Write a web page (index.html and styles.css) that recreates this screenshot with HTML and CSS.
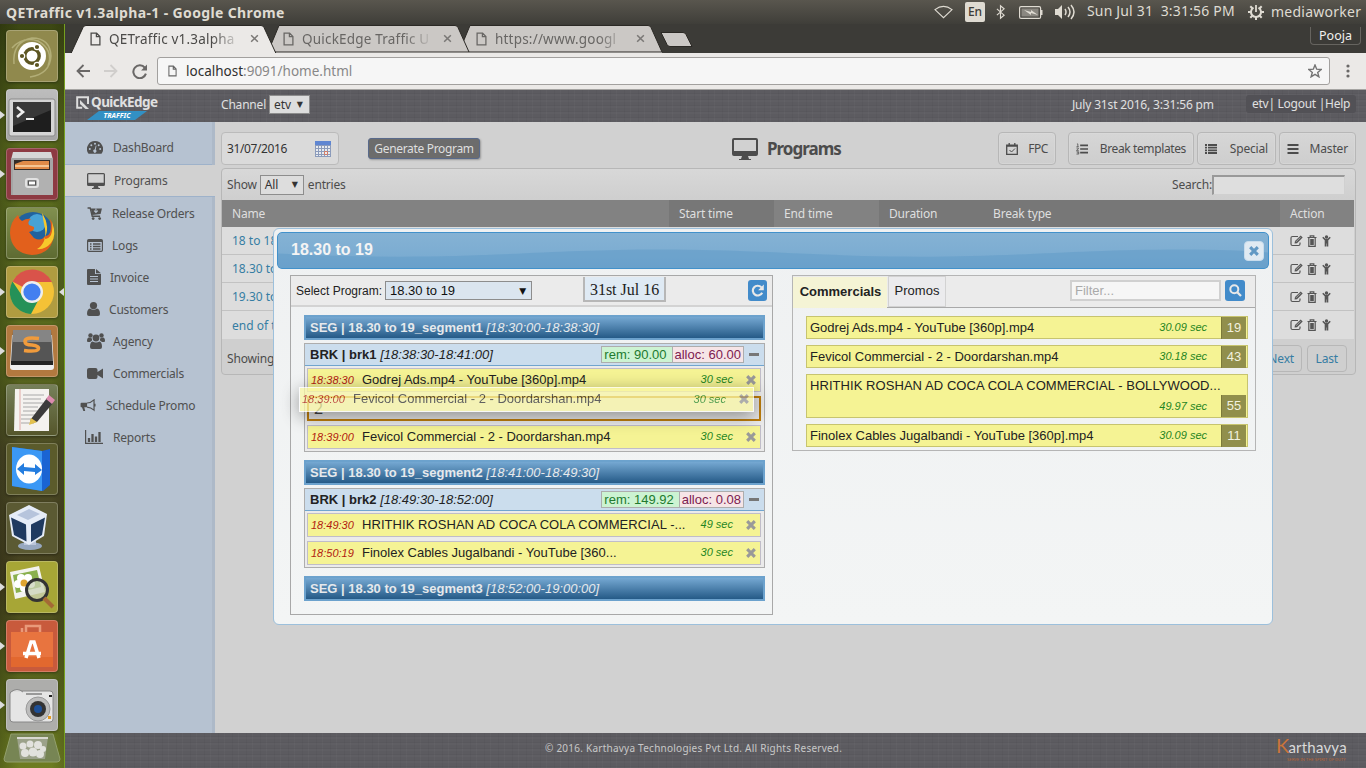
FILE: index.html
```html
<!DOCTYPE html>
<html lang="en">
<head>
<meta charset="utf-8">
<title>QETraffic v1.3alpha-1</title>
<link rel="stylesheet" href="styles.css">
</head>
<body>
<svg class="defs" width="0" height="0">
  <defs>
    <symbol id="page" viewBox="0 0 12 15"><path d="M1.2 1h6l3.6 3.8V14H1.2zM7 1.2V5h3.8" fill="none" stroke="currentColor" stroke-width="1.4"/></symbol>
    <symbol id="x" viewBox="0 0 10 10"><path d="M1.3 1.3l7.4 7.4M8.7 1.3L1.3 8.7" stroke="currentColor" stroke-width="1.7"/></symbol>
    <symbol id="times" viewBox="0 0 10 10"><path d="M1.2 1.2l7.6 7.6M8.8 1.2L1.2 8.8" stroke="currentColor" stroke-width="3.1"/></symbol>
    <symbol id="monitor" viewBox="0 0 18 16"><path fill-rule="evenodd" d="M1.5 0h15A1.5 1.5 0 0 1 18 1.500v10a1.500 1.500 0 0 1-1.500 1.500H11l.7 2H13v1H5v-1h1.300l.7-2H1.500A1.500 1.500 0 0 1 0 11.500v-10A1.500 1.500 0 0 1 1.500 0zM1.300 1.300v8.400h15.400V1.300z" fill="currentColor"/></symbol>
    <symbol id="edit" viewBox="0 0 13 12"><path d="M8 1.500H2.500Q1 1.500 1 3v6q0 1.500 1.500 1.500h6Q10 10.500 10 9V7.500" fill="none" stroke="currentColor" stroke-width="1.200"/><path d="M4.500 8.600l.5-2.500L10.700.5l2 2L7 8.200z" fill="currentColor"/><path d="M6 6.800l4.500-4.500" stroke="#ddd" stroke-width=".6"/></symbol>
    <symbol id="trash" viewBox="0 0 10 12"><path d="M3.200 2V.8h3.600V2M.5 2.500h9M1.800 3v8.300h6.400V3M3.800 4v6M5 4v6M6.200 4v6" fill="none" stroke="currentColor" stroke-width="1.200"/></symbol>
    <symbol id="child" viewBox="0 0 9 12"><circle cx="4.500" cy="2" r="1.700" fill="currentColor"/><path d="M.8 2.300L3 4.500h3l2.200-2.200M3.500 4.500v7M5.500 4.500v7M4.500 4.500v4" fill="none" stroke="currentColor" stroke-width="1.600"/></symbol>
  </defs>
</svg>

<header class="panel">
  <span class="panel-title">QETraffic v1.3alpha-1 - Google Chrome</span>
  <svg class="tray tray-wifi" viewBox="0 0 20 14"><path d="M1 4.500Q10-2.500 19 4.500L10 13z" fill="none" stroke="currentColor" stroke-width="1.200"/></svg>
  <span class="lang">En</span>
  <svg class="tray tray-bt" viewBox="0 0 10 16"><path d="M1 4.500l8 7L5 15V1l4 3.500-8 7" fill="none" stroke="currentColor" stroke-width="1.300"/></svg>
  <svg class="tray tray-batt" viewBox="0 0 24 13"><rect x=".6" y=".6" width="21" height="11.800" rx="1.500" fill="none" stroke="currentColor" stroke-width="1.200"/><path d="M22 4h1.500v5H22z" fill="currentColor"/><path d="M2.500 2.500h17v8h-17z" fill="#8a8780"/><path d="M5 4l7 2 0-2 7 5-7-2v2z" fill="currentColor"/></svg>
  <svg class="tray tray-vol" viewBox="0 0 20 16"><path d="M0 5h3l4-4v14l-4-4H0z" fill="currentColor"/><path d="M10 5q2 3 0 6M13 3q4 5 0 10M16 1q6 7 0 14" fill="none" stroke="currentColor" stroke-width="1.500"/></svg>
  <span class="clock">Sun Jul 31&nbsp; 3:31:56 PM</span>
  <svg class="tray tray-gear" viewBox="0 0 16 16"><g stroke="currentColor" fill="none"><path d="M5.500 3.700a5 5 0 1 0 5 0" stroke-width="2"/><path d="M8 1v7" stroke-width="1.800"/><path d="M0 8h3M13 8h3M8 13v3M2.300 2.300l2 2M13.700 2.300l-2 2M2.300 13.700l2-2M13.700 13.700l-2-2" stroke-width="2"/></g></svg>
  <span class="user">mediaworker</span>
</header>

<div class="desktop">
  <nav class="launcher">
    <div class="tile t-dash"><svg viewBox="0 0 52 52"><path d="M8 34Q6 12 26 8q18 0 19 18-1 18-21 21M6 18Q17 6 32 11q16 9 10 25" fill="none" stroke="#c9c695" stroke-width="1.500" opacity=".6"/><circle cx="26" cy="26" r="14" fill="#fff"/><circle cx="26" cy="26" r="7.200" fill="none" stroke="#5c5522" stroke-width="3.400"/><g fill="#5c5522" stroke="#fff" stroke-width="1.200"><circle cx="16" cy="26" r="2.700"/><circle cx="31" cy="17" r="2.700"/><circle cx="31" cy="35" r="2.700"/></g></svg></div>
    <div class="tile t-term run"><svg viewBox="0 0 52 52"><rect x="3" y="10" width="46" height="37" rx="2" fill="#d5d5d5" stroke="#8b8b8b"/><rect x="7" y="13" width="38" height="30" fill="#1e1e1e"/><path d="M7 13h38v8L7 37z" fill="#4a4a4a" opacity=".6"/><path d="M11 18l6 5-6 5" fill="none" stroke="#eee" stroke-width="2.600"/><path d="M20 30h8" stroke="#eee" stroke-width="2"/></svg></div>
    <div class="tile t-files run"><svg viewBox="0 0 52 52"><path d="M7 4h38l2 8H5z" fill="#d6d6d6"/><path d="M5 10h42v37H5z" fill="#a5a5a5"/><path d="M8 12h36v14H8z" fill="#322b28"/><path d="M9 16l8-3h26v8H9z" fill="#e08a48"/><path d="M9 18h34" stroke="#fbd7ad" stroke-width="1.500"/><path d="M7 22h40v25H7z" fill="#b1b1b1"/><rect x="20" y="31" width="12" height="8" rx="2" fill="#aaa" stroke="#e2e2e2" stroke-width="2"/><rect x="22.500" y="33" width="7" height="4" fill="#fff" stroke="#555"/></svg></div>
    <div class="tile t-fox"><svg viewBox="0 0 52 52"><circle cx="27" cy="25" r="20" fill="#21629e"/><circle cx="31" cy="16" r="9" fill="#47a2d6"/><path d="M4 26Q4 15 12 8q1 4 4 6 5-3 9-2-4 3-2 6l5 2q1 4-5 5l5 6q7 4 11-2 8 0 5-17 4 5 4 14-1 21-22 22Q5 46 4 26z" fill="#e2601c"/><path d="M36 6q9 14 2 26 10 0 8-17 5 14-1 21-6 7-14 6 10-6 8-20z" fill="#f7c92b"/></svg></div>
    <div class="tile t-chrome run active"><svg viewBox="0 0 52 52"><circle cx="26" cy="26" r="22" fill="#f4c236"/><path d="M26 26L6.500 15.500A22 22 0 0 1 46 16H26z" fill="#d9534a"/><path d="M6.500 15.500A22 22 0 0 0 25 48l9-17-8 5-9-5z" fill="#259158"/><circle cx="26" cy="26" r="11" fill="#eee"/><circle cx="26" cy="26" r="8.600" fill="#437ff0"/></svg></div>
    <div class="tile t-sub run"><svg viewBox="0 0 52 52"><path d="M6 10h40l2 32q0 3-3 3H7q-3 0-3-3z" fill="#eee"/><path d="M7 5h38l2 32H5z" fill="#555"/><path d="M7 5h38v12H7z" fill="#858585"/><path d="M5 36h42v4H5z" fill="#222"/><path d="M33 13.500q-14-2-14 3 0 3.500 7 3.500 8 1 6 4.500-2 2.500-14 1" fill="none" stroke="#f09b3c" stroke-width="3.600"/></svg></div>
    <div class="tile t-doc"><svg viewBox="0 0 52 52"><path d="M9 5h34v42H8z" fill="#f4f2ef"/><path d="M14 5v41" stroke="#e0aaa5"/><path d="M17 11h21M17 15h18M17 19h20M17 23h15M17 27h17M15 31h14M15 35h11M15 39h13" stroke="#a8a8a8"/><path d="M25 35L41 14l6 5-16 19-7 1z" fill="#3b3b3b"/><path d="M25 34l6 4-8 3z" fill="#e3c14e"/><path d="M40 15l3-4 6 5-3 4z" fill="#dc8cae"/></svg></div>
    <div class="tile t-team"><svg viewBox="0 0 52 52"><path d="M6 4l30 4 8-2v36l-7 6-31-5z" fill="#1a64d3"/><path d="M6 4l30 4v40L6 43z" fill="#3b98f5"/><ellipse cx="23" cy="26" rx="13" ry="14.500" fill="#fff"/><path d="M11 26l7-6v4l11 1v-4l7 6-7 5v-3l-11-1v4z" fill="#247ddf"/></svg></div>
    <div class="tile t-vbox"><svg viewBox="0 0 52 52"><ellipse cx="24" cy="44" rx="12" ry="4" fill="#97a8c0"/><path d="M18 34h12v9H18z" fill="#bbc6da"/><path d="M3 13L23 3l18 9-3 22-15 9-17-9z" fill="#e5ecf7"/><path d="M5 15.500l15 7 .5 17L8 33zM25 22.500l14-7L36 33l-11 7z" fill="#1f3a60"/><path d="M11 13l12-6 11 5-12 6z" fill="#b6c4dc"/></svg></div>
    <div class="tile t-view run"><svg viewBox="0 0 52 52"><path d="M4 11l29-6 6 26-30 7z" fill="#f3f3ef"/><path d="M7 14l24-5 4 17-25 6z" fill="#8ab04e"/><g fill="#fff"><circle cx="15" cy="17" r="4"/><circle cx="22" cy="17" r="4"/><circle cx="25" cy="23" r="4"/><circle cx="18" cy="27" r="4"/><circle cx="12" cy="23" r="4"/></g><circle cx="18" cy="22" r="3.500" fill="#e0a530"/><circle cx="31" cy="29" r="10.500" fill="#cbd3b8" fill-opacity=".75" stroke="#333" stroke-width="3"/><path d="M38 37l9 9" stroke="#a46a35" stroke-width="4"/></svg></div>
    <div class="tile t-soft run"><svg viewBox="0 0 52 52"><path d="M20 16V6h14v10M16 13V8" fill="none" stroke="#e99a7a" stroke-width="2.500"/><path d="M5 12h42v35H5z" fill="#e8743f"/><path d="M5 37h42v10H5z" fill="#e2682f"/><path d="M20 38l5-16h3l5 16M17 33.500h18" fill="none" stroke="#fff" stroke-width="3.500"/></svg></div>
    <div class="tile t-cam run"><svg viewBox="0 0 52 52"><rect x="4" y="12" width="43" height="31" rx="3" fill="#e5e5e5" stroke="#888"/><path d="M5 13q6-5 12 0" fill="#ddd" stroke="#888"/><path d="M20 15h16" stroke="#999" stroke-width="2"/><circle cx="32" cy="30" r="12" fill="#bcbcbc" stroke="#999"/><circle cx="32" cy="30" r="8" fill="#333"/><circle cx="32" cy="30" r="4" fill="#1d4f96"/><path d="M42 37h3v3h-3z" fill="#e39a22"/><path d="M43 16h3v2h-3z" fill="#222"/></svg></div>
    <svg class="trash-can" viewBox="0 0 58 31"><path d="M8 1h42l7 25q0 3-3 3H4q-3 0-3-3z" fill="#778554" stroke="#93a06d"/><path d="M14 4h31l-3 22H17z" fill="#9ca28a"/><path d="M14 5h31" stroke="#d8d8d0" stroke-width="2"/><g fill="#e2e2dd"><circle cx="20" cy="13" r="3.500"/><circle cx="27" cy="11" r="3.500"/><circle cx="35" cy="12" r="4"/><circle cx="40" cy="16" r="3"/><circle cx="22" cy="20" r="4"/><circle cx="30" cy="19" r="4.500"/><circle cx="37" cy="21" r="4"/></g></svg>
  </nav>

  <div class="browser">
    <div class="tabstrip">
      <svg class="tab-shapes" viewBox="0 0 640 29"><path d="M394 28l11-26.500h178q2 0 3 2L597 28z" fill="#cbc8c5" stroke="#2b2925"/><path d="M203 28l11-26.500h176q2 0 3 2L404 28z" fill="#cbc8c5" stroke="#2b2925"/><path d="M207 28.500h390" stroke="#8f8d8a"/><path d="M6 29.500L18 3.500q1-2 3-2h175q2 0 3 2L211 29.500z" fill="#ebe9e7" stroke="#2b2925"/><path d="M596 8.500h22q2 0 3 2l6 12h-22q-2 0-3-2z" fill="#cbc8c5" stroke="#2b2925"/></svg>
      <div class="tab"><svg class="tab-page"><use href="#page"/></svg><span class="tab-name">QETraffic v1.3alpha</span><svg class="tab-x"><use href="#x"/></svg></div>
      <div class="tab tab-off"><svg class="tab-page"><use href="#page"/></svg><span class="tab-name">QuickEdge Traffic U</span><svg class="tab-x"><use href="#x"/></svg></div>
      <div class="tab tab-off"><svg class="tab-page"><use href="#page"/></svg><span class="tab-name">https://www.googl</span><svg class="tab-x"><use href="#x"/></svg></div>
      <span class="profile">Pooja</span>
    </div>
    <div class="toolbar">
      <svg class="nav-back" viewBox="0 0 14 14"><path d="M14 7H2M7.500 1L1.500 7l6 6" fill="none" stroke="#6a6867" stroke-width="1.800"/></svg>
      <svg class="nav-fwd" viewBox="0 0 14 14"><path d="M0 7h12M6.500 1l6 6-6 6" fill="none" stroke="#d0cecc" stroke-width="1.800"/></svg>
      <svg class="nav-reload" viewBox="0 0 14 14"><path d="M12 3.500A6 6 0 1 0 13 9" fill="none" stroke="#6a6867" stroke-width="1.900"/><path d="M14 .5v5.500H8.500z" fill="#6a6867"/></svg>
      <div class="omnibox">
        <svg class="omni-page"><use href="#page"/></svg>
        <span class="url">localhost<span class="url-rest">:9091/home.html</span></span>
        <svg class="star" viewBox="0 0 14 14"><path d="M7 1l1.700 4.200 4.500.3-3.500 2.900 1.200 4.400L7 10.300l-3.900 2.500 1.200-4.400L.8 5.500l4.500-.3z" fill="none" stroke="#737373" stroke-width="1.400"/></svg>
      </div>
      <svg class="kebab" viewBox="0 0 4 14"><g fill="#6a6867"><circle cx="2" cy="2" r="1.600"/><circle cx="2" cy="7" r="1.600"/><circle cx="2" cy="12" r="1.600"/></g></svg>
    </div>

    <div class="app-head">
      <div class="brand">
        <svg class="brand-mark" viewBox="0 0 13 13"><path d="M12 8V1.200H1.200v10.600h5" fill="none" stroke="#ddd" stroke-width="2"/><path d="M4 4l9 9H9.500L4 8z" fill="#ddd"/></svg>
        <span class="brand-name">QuickEdge</span>
        <span class="brand-sub">TRAFFIC</span>
      </div>
      <span class="channel">Channel</span>
      <span class="sel sel-etv">etv<i class="caret">▼</i></span>
      <span class="stamp">July 31st 2016, 3:31:56 pm</span>
      <span class="links">etv| Logout |Help</span>
    </div>

    <div class="app-body">
      <nav class="side">
        <a class="item item-dash"><svg viewBox="0 0 16 13"><path d="M8 0a8 8 0 0 0-6.800 12.300q.3.500.8.500h12q.5 0 .8-.5A8 8 0 0 0 8 0z" fill="currentColor"/><g fill="#b6c2d1"><circle cx="2.800" cy="8" r="1"/><circle cx="4.300" cy="4.300" r="1"/><circle cx="8" cy="2.800" r="1"/><circle cx="11.700" cy="4.300" r="1"/><circle cx="13.200" cy="8" r="1"/><path d="M8.800 4.500l.7.200-.8 4a1.600 1.600 0 1 1-1-.2z"/></g></svg><span>DashBoard</span></a>
        <a class="item item-on"><svg viewBox="0 0 18 16"><use href="#monitor"/></svg><span>Programs</span></a>
        <a class="item item-cart"><svg viewBox="0 0 16 14"><path d="M0 1h2.800l2.200 9h8.500" fill="none" stroke="currentColor" stroke-width="1.500"/><path d="M3.500 1.500H15.500L14 7.500 5 8.500z" fill="currentColor"/><path d="M9 1.500v4M7 4l2 2 2-2" fill="none" stroke="#b6c2d1" stroke-width="1.200"/><circle cx="6" cy="12.500" r="1.500" fill="currentColor"/><circle cx="13" cy="12.500" r="1.500" fill="currentColor"/></svg><span>Release Orders</span></a>
        <a class="item item-logs"><svg viewBox="0 0 16 13"><rect x=".6" y=".6" width="14.800" height="11.800" rx="1.200" fill="none" stroke="currentColor" stroke-width="1.200"/><path d="M1 1h14v2H1z" fill="currentColor"/><path d="M3 5h1.500M6 5h7.500M3 7.500h1.500M6 7.500h7.500M3 10h1.500M6 10h7.500" stroke="currentColor" stroke-width="1.400"/></svg><span>Logs</span></a>
        <a class="item item-inv"><svg viewBox="0 0 14 16"><path d="M0 1q0-1 1-1h7v5h6v10q0 1-1 1H1q-1 0-1-1zM9 0l5 4.300H9z" fill="currentColor"/><path d="M3 7.500h8M3 10h8M3 12.500h8" stroke="#b6c2d1"/></svg><span>Invoice</span></a>
        <a class="item item-cust"><svg viewBox="0 0 13 14"><circle cx="6.500" cy="3.600" r="3.600" fill="currentColor"/><path d="M0 12q0-5 3-5.500 3.500 2.500 7 0 3 .5 3 5.500 0 2-2 2H2q-2 0-2-2z" fill="currentColor"/></svg><span>Customers</span></a>
        <a class="item item-agency"><svg viewBox="0 0 18 16"><g fill="currentColor"><circle cx="3.500" cy="2.500" r="2.200"/><circle cx="14.500" cy="2.500" r="2.200"/><circle cx="9" cy="5" r="3.400"/><path d="M0 8q0-3.500 2-3.500l3 1v2L3 9H1Q0 9 0 8zM18 8q0-3.500-2-3.500l-3 1v2L15 9h2q1 0 1-1zM3 14q0-5 2.500-5.500 3.500 2 7 0Q15 9 15 14q0 2-2 2H5q-2 0-2-2z"/></g></svg><span>Agency</span></a>
        <a class="item item-com"><svg viewBox="0 0 16 12"><path d="M2 .5h6.500q2 0 2 2V4.500L16 1v10l-5.500-3.500v2q0 2-2 2H2q-2 0-2-2v-7q0-2 2-2z" fill="currentColor"/></svg><span>Commercials</span></a>
        <a class="item item-promo"><svg viewBox="0 0 16 14"><path d="M0 5q0-1 1-1h6v5H4l1 4H3L1.500 9Q0 9 0 8z" fill="currentColor"/><path d="M7 4.300q4 0 7.500-3.300v11Q11 9 7 8.700M15.500 5v3" fill="none" stroke="currentColor" stroke-width="1.300"/></svg><span>Schedule Promo</span></a>
        <a class="item item-rep"><svg viewBox="0 0 18 14"><path d="M.6 0v13.400H18" fill="none" stroke="currentColor" stroke-width="1.200"/><path d="M4 12V8M7.500 12V4M11 12V6.500M14.500 12V2" stroke="currentColor" stroke-width="2.300"/></svg><span>Reports</span></a>
      </nav>

      <main class="main">
        <div class="tools">
          <div class="date">31/07/2016<svg viewBox="0 0 16 16"><path d="M0 1h16v15H0z" fill="#8b9bbb"/><path d="M0 0h16v4H0z" fill="#5f86d2"/><path d="M1 5h2v2H1zm3 0h2v2H4zm3 0h2v2H7zm3 0h2v2h-2zm3 0h2v2h-2zM1 8h2v2H1zm3 0h2v2H4zm3 0h2v2H7zm3 0h2v2h-2zm3 0h2v2h-2zM1 11h2v2H1zm3 0h2v2H4zm3 0h2v2H7zm3 0h2v2h-2zm3 0h2v2h-2zM1 14h2v1H1zm3 0h2v1H4zm3 0h2v1H7zm3 0h2v1h-2zm3 0h2v1h-2z" fill="#e8ebef"/><path d="M9.500 10.500h3v3h-3z" fill="none" stroke="#d17c67"/></svg></div>
          <span class="gen">Generate Program</span>
          <div class="heading"><svg viewBox="0 0 26 22"><path fill-rule="evenodd" d="M2 0h22q2 0 2 2v14q0 2-2 2h-8l1 3h2v1H7v-1h2l1-3H2q-2 0-2-2V2q0-2 2-2zm0 2v11h22V2z" fill="currentColor"/></svg>Programs</div>
          <span class="btn btn-fpc"><svg viewBox="0 0 12 12"><path d="M.7 2.200h10.600v9.100H.7zM1 3h10M3.200 0v3M8.800 0v3" fill="none" stroke="currentColor" stroke-width="1.300"/><path d="M3.500 7l2 2L9 5.500" fill="none" stroke="currentColor"/></svg>FPC</span>
          <span class="btn btn-brk"><svg viewBox="0 0 13 12"><path d="M4.500 2H13M4.500 6H13M4.500 10H13" stroke="currentColor" stroke-width="1.800"/><path d="M1 .5h1v3M.5 3.500h2.500M.5 5h2v1L.5 7.500H3M.5 9H3v2.500H.5M1 10.200h2" fill="none" stroke="currentColor" stroke-width=".8"/></svg>Break templates</span>
          <span class="btn btn-spc"><svg viewBox="0 0 12 12"><path d="M0 2h2M3 2h9M0 4.700h2M3 4.700h9M0 7.400h2M3 7.400h9M0 10h2M3 10h9" stroke="currentColor" stroke-width="1.800"/></svg>Special</span>
          <span class="btn btn-mst"><svg viewBox="0 0 11 12"><path d="M0 2h11M0 6h11M0 10h11" stroke="currentColor" stroke-width="1.800"/></svg>Master</span>
        </div>

        <section class="grid-box">
          <div class="grid-top">Show<span class="sel sel-all">All<i class="caret">▼</i></span>entries<span class="search">Search:<i class="search-in"></i></span></div>
          <div class="row row-head"><span>Name</span><span>Start time</span><span>End time</span><span>Duration</span><span>Break type</span><span>Action</span></div>
          <div class="row"><span class="link">18 to 18.30</span><span class="acts"><svg><use href="#edit"/></svg><svg class="a-trash"><use href="#trash"/></svg><svg class="a-child"><use href="#child"/></svg></span></div>
          <div class="row"><span class="link">18.30 to 19</span><span class="acts"><svg><use href="#edit"/></svg><svg class="a-trash"><use href="#trash"/></svg><svg class="a-child"><use href="#child"/></svg></span></div>
          <div class="row"><span class="link">19.30 to 20</span><span class="acts"><svg><use href="#edit"/></svg><svg class="a-trash"><use href="#trash"/></svg><svg class="a-child"><use href="#child"/></svg></span></div>
          <div class="row"><span class="link">end of tx</span><span class="acts"><svg><use href="#edit"/></svg><svg class="a-trash"><use href="#trash"/></svg><svg class="a-child"><use href="#child"/></svg></span></div>
          <div class="grid-foot"><span>Showing</span><span class="pager"><i class="pg">Next</i><i class="pg pg-last">Last</i></span></div>
        </section>
      </main>
    </div>

    <footer class="foot"><span class="copy">© 2016. Karthavya Technologies Pvt Ltd. All Rights Reserved.</span><span class="kart"><span class="kart-name"><b>K</b>arthavya</span><span class="kart-sub">SERVE IN THE SPIRIT OF DUTY</span></span></footer>
  </div>
</div>

<div class="dialog">
  <div class="dlg-head"><svg class="dlg-wave" viewBox="0 0 990 34" preserveAspectRatio="none"><path d="M0 20C40 22 80 23 122 23C220 23 280 16 382 16S540 23 642 23 800 16 902 16C940 16 970 17 990 19V34H0z" fill="#5292c4" opacity=".35"/></svg><span class="dlg-title">18.30 to 19</span><span class="dlg-close"><svg><use href="#times"/></svg></span></div>
  <div class="dlg-body">
    <section class="plan">
      <div class="plan-top"><span>Select Program:</span><span class="sel sel-prog">18.30 to 19<i class="caret">▼</i></span><span class="day">31st Jul 16</span><span class="blue refresh"><svg viewBox="0 0 12 12"><path d="M9.500 3A4.500 4.500 0 1 0 10.300 8" fill="none" stroke="#e8e8e8" stroke-width="2"/><path d="M11.800.5v5.200H6.600z" fill="#e8e8e8"/></svg></span></div>
      <div class="plan-list">
        <div class="seg"><b>SEG | 18.30 to 19_segment1</b> <i>[18:30:00-18:38:30]</i></div>
        <div class="brk">
          <div class="brk-head"><span><b>BRK | brk1</b> <i>[18:38:30-18:41:00]</i></span><span class="rem">rem: 90.00</span><span class="alloc">alloc: 60.00</span><span class="minus"></span></div>
          <div class="spot"><i class="at">18:38:30</i><span>Godrej Ads.mp4 - YouTube [360p].mp4</span><i class="dur">30 sec</i><svg><use href="#times"/></svg></div>
          <div class="slot">2</div>
          <div class="spot"><i class="at">18:39:00</i><span>Fevicol Commercial - 2 - Doordarshan.mp4</span><i class="dur">30 sec</i><svg><use href="#times"/></svg></div>
        </div>
        <div class="seg"><b>SEG | 18.30 to 19_segment2</b> <i>[18:41:00-18:49:30]</i></div>
        <div class="brk">
          <div class="brk-head"><span><b>BRK | brk2</b> <i>[18:49:30-18:52:00]</i></span><span class="rem">rem: 149.92</span><span class="alloc">alloc: 0.08</span><span class="minus"></span></div>
          <div class="spot"><i class="at">18:49:30</i><span class="caps">HRITHIK ROSHAN AD COCA COLA COMMERCIAL -...</span><i class="dur">49 sec</i><svg><use href="#times"/></svg></div>
          <div class="spot"><i class="at">18:50:19</i><span>Finolex Cables Jugalbandi - YouTube [360...</span><i class="dur">30 sec</i><svg><use href="#times"/></svg></div>
        </div>
        <div class="seg"><b>SEG | 18.30 to 19_segment3</b> <i>[18:52:00-19:00:00]</i></div>
      </div>
    </section>
    <section class="media">
      <div class="media-top"><span class="mtab mtab-on">Commercials</span><span class="mtab">Promos</span><span class="filter">Filter...</span><span class="blue"><svg viewBox="0 0 13 13"><circle cx="5.300" cy="5.300" r="4" fill="none" stroke="#e8e8e8" stroke-width="2"/><path d="M8.300 8.300l3.700 3.700" stroke="#e8e8e8" stroke-width="2.300"/></svg></span></div>
      <div class="media-list">
        <div class="clip"><span>Godrej Ads.mp4 - YouTube [360p].mp4</span><i class="dur">30.09 sec</i><span class="count">19</span></div>
        <div class="clip"><span>Fevicol Commercial - 2 - Doordarshan.mp4</span><i class="dur">30.18 sec</i><span class="count">43</span></div>
        <div class="clip clip-tall"><span class="clip-name caps">HRITHIK ROSHAN AD COCA COLA COMMERCIAL - BOLLYWOOD...</span><i class="dur">49.97 sec</i><span class="count">55</span></div>
        <div class="clip"><span>Finolex Cables Jugalbandi - YouTube [360p].mp4</span><i class="dur">30.09 sec</i><span class="count">11</span></div>
      </div>
    </section>
  </div>
  <div class="spot dragged"><i class="at">18:39:00</i><span>Fevicol Commercial - 2 - Doordarshan.mp4</span><i class="dur">30 sec</i><svg><use href="#times"/></svg></div>
</div>
</body>
</html>
```
FILE: styles.css
```css
* { box-sizing: border-box; }
body { margin: 0; width: 1366px; height: 768px; overflow: hidden; position: relative; font-family: "Noto Sans", "Open Sans", sans-serif; font-size: 12px; color: #4c4c4c; white-space: nowrap; }
svg { display: block; flex: none; }
.defs { position: absolute; }

/* desktop panel */
.panel { height: 24px; display: flex; align-items: center; padding-left: 6px; background: linear-gradient(#59564e, #3f3e39); color: #dfdbd2; font-size: 14px; }
.panel-title { font-weight: bold; font-size: 14px; letter-spacing: .37px; width: 928px; flex: none; }
.tray-wifi { width: 19px; height: 14px; }
.lang { width: 20px; height: 20px; margin-left: 12px; border-radius: 2px; background: #dfdbd2; color: #3c3b37; font-size: 12px; line-height: 20px; text-align: center; font-weight: 500; }
.tray-bt { width: 9px; height: 16px; margin-left: 11px; }
.tray-batt { width: 24px; height: 13px; margin-left: 14px; }
.tray-vol { width: 20px; height: 16px; margin-left: 12px; }
.clock { margin-left: 12px; width: 149px; letter-spacing: .17px; line-height: 22px; margin-top: -2px; }
.tray-gear { width: 16px; height: 16px; margin-left: 12px; }
.user { margin-left: 7px; letter-spacing: .25px; margin-top: -2px; }

.desktop { display: flex; height: 744px; }
.launcher { width: 65px; display: flex; flex-direction: column; gap: 7px; padding: 6px 0 0 6px; border-right: 1px solid #76a01f; background: linear-gradient(90deg, #0003, transparent 30%, transparent 80%, #0002), linear-gradient(#3c4713, #5b6c1d 18%, #57671e 35%, #5a6b1c 45%, #4c4a26 58%, #46421f 75%, #5b6a1c 90%, #6e7d22); }
.tile { width: 52px; height: 52px; flex: none; border-radius: 4px; position: relative; border: 1px solid #ffffff38; box-shadow: 0 1px 3px #0006; }
.tile svg { width: 52px; height: 52px; margin: -1px; }
.t-dash { background: #90894d; }
.t-term { background: linear-gradient(#bdbdbd, #a5a5a5); }
.t-files { background: #8d3a42; }
.t-fox { background: linear-gradient(#81904f, #5e6b32); }
.t-chrome { background: #b09c40; }
.t-sub { background: #b2793f; }
.t-doc { background: linear-gradient(#76805a, #55562b); }
.t-team { background: #5b5b2b; }
.t-vbox { background: #5b5a33; }
.t-view { background: #a7a636; }
.t-soft { background: #c85a3c; }
.t-cam { background: #adadab; }
.run::before { content: ""; position: absolute; left: -7px; top: 21px; border: 4px solid transparent; border-left: 5px solid #ddd; border-right: 0; }
.active::after { content: ""; position: absolute; right: -7px; top: 21px; border: 4px solid transparent; border-right: 5px solid #ddd; border-left: 0; }
.trash-can { width: 58px; height: 31px; margin: -5px 0 0 -3px; }

/* browser chrome */
.browser { width: 1301px; display: flex; flex-direction: column; }
.tabstrip { height: 29px; position: relative; background: #3c3b37; display: flex; align-items: center; padding-left: 25px; flex: none; }
.tab-shapes { position: absolute; left: 0; top: 0; width: 640px; height: 29px; }
.tab { width: 193px; display: flex; align-items: center; color: #4b4a48; font-size: 13.5px; position: relative; }
.tab-off { color: #686664; }
.tab-page { width: 11px; height: 14px; }
.tab-name { width: 132px; margin: 0 9px 0 8px; letter-spacing: .2px; -webkit-mask-image: linear-gradient(90deg, #000 78%, transparent); mask-image: linear-gradient(90deg, #000 78%, transparent); }
.tab-x { width: 9px; height: 9px; color: #7a7876; }
.profile { margin: -6px 5px 0 auto; width: 51px; height: 18px; border: 1px solid #66645f; border-top: 0; border-radius: 0 0 4px 4px; color: #f2f1ef; font-size: 12.5px; line-height: 18px; text-align: center; }
.toolbar { height: 37px; flex: none; display: flex; align-items: center; padding: 0 16px 0 11px; background: #ebe9e7; border-bottom: 1px solid #a5a4a2; }
.nav-back, .nav-fwd { width: 14px; height: 14px; }
.nav-fwd { margin-left: 14px; }
.nav-reload { width: 15px; height: 15px; margin-left: 14px; }
.omnibox { width: 1173px; height: 28px; margin-left: 10px; display: flex; align-items: center; padding: 0 7px 0 10px; border: 1px solid #a2a09e; border-radius: 3px; background: #f6f6f6; font-size: 13.5px; color: #303030; }
.omni-page { width: 9px; height: 12px; color: #666; }
.url { margin-left: 9px; }
.url-rest { color: #888; }
.star { width: 14px; height: 14px; margin-left: auto; }
.kebab { width: 4px; height: 14px; margin-left: auto; }

/* application */
.app-head, .foot { background: repeating-linear-gradient(90deg, #fff0 0 5px, #ffffff06 5px 6px, #0000 6px 13px, #00000008 13px 14px), repeating-linear-gradient(#0000 0 3px, #00000009 3px 4px, #ffffff05 4px 6px), #5c5b60; }
.app-head { height: 32px; flex: none; display: flex; align-items: center; color: #e0e0e0; padding: 0 10px 4px 11px; }
.brand { width: 145px; height: 28px; display: grid; grid-template-columns: 15px 1fr; align-content: start; padding-top: 4px; }
.brand-mark { width: 13px; height: 13px; margin-top: 2px; }
.brand-name { font-weight: bold; font-size: 13.5px; line-height: 16px; letter-spacing: -.55px; }
.brand-sub { grid-column: 1 / 3; width: 60px; height: 9px; margin: 1px 0 0 11px; background: #3290c4; clip-path: polygon(20% 0, 100% 0, 80% 100%, 0 100%); color: #fff; font-size: 7px; line-height: 9px; font-weight: bold; font-style: italic; text-align: center; }
.channel { width: 48px; letter-spacing: -.2px; }
.sel { display: inline-flex; align-items: center; justify-content: space-between; border: 1px solid #8d8d8d; background: #ddd; color: #333; }
.caret { font-style: normal; font-family: "DejaVu Sans", sans-serif; font-size: 8px; }
.sel-etv { width: 41px; height: 19px; padding: 0 6px 0 4px; }
.stamp { margin-left: auto; width: 144px; letter-spacing: -.17px; }
.links { margin-left: 30px; width: 110px; height: 18px; border-radius: 3px; background: #525156; line-height: 18px; padding-left: 6px; letter-spacing: -.27px; }
.app-body { height: 611px; display: flex; background: #d1d1d1; flex: none; }
.side { width: 150px; background: #b6c2d1; border-right: 3px solid #adb9c8; padding-top: 9px; letter-spacing: -.2px; }
.item { height: 32px; display: flex; align-items: center; padding-left: 22px; color: #505050; }
.item svg { width: 16px; height: 13px; }
.item span { margin-left: 10px; }
.item-dash { height: 34px; padding-bottom: 1px; border-bottom: 1px solid #9eb2ca; }
.item-on { width: 150px; background: #d1d1d1; border-bottom: 1px solid #9eb2ca; }
.item-on svg { width: 18px; height: 16px; }
.item-on span { margin-left: 9px; }
.item-cart span { margin-left: 9px; }
.item-logs span, .item-inv span, .item-cust span { margin-left: 9px; }
.item-inv svg { width: 14px; height: 16px; }
.item-cust svg { width: 13px; height: 14px; }
.item-agency svg { width: 18px; height: 16px; }
.item-agency span { margin-left: 8px; }
.item-promo { padding-left: 15px; }
.item-rep { padding-left: 20px; }
.item-rep svg { width: 18px; height: 14px; }

.main { flex: 1; padding: 10px 10px 0 6px; letter-spacing: -.17px; }
.tools { height: 33px; display: flex; align-items: center; }
.date { width: 118px; height: 33px; display: flex; align-items: center; justify-content: space-between; padding: 0 7px 0 5px; border: 1px solid #bbb; border-radius: 4px; background: #dadada; color: #333; letter-spacing: -.4px; }
.date svg { width: 16px; height: 16px; }
.gen { width: 112px; height: 21px; margin-left: 29px; border: 1px solid #596a8b; border-radius: 3px; background: #6c6c6c; color: #dfdfdf; line-height: 19px; text-align: center; letter-spacing: -.33px; box-shadow: 1px 1px 2px #999; }
.heading { margin-left: 252px; width: 266px; display: flex; align-items: center; gap: 9px; font-weight: bold; font-size: 17px; letter-spacing: -1px; }
.heading svg { width: 26px; height: 22px; }
.btn { height: 33px; display: flex; align-items: center; justify-content: space-between; border: 1px solid #b7b7b7; border-radius: 4px; padding: 0 7px; background: linear-gradient(#d6d6d6, #cecece); box-shadow: inset 0 0 0 1px #dcdcdc77; }
.btn svg { width: 12px; height: 12px; }
.btn-fpc { width: 58px; margin-right: 12px; letter-spacing: -.4px; }
.btn-brk { width: 126px; margin-right: 3px; letter-spacing: -.38px; }
.btn-spc { width: 79px; margin-right: 3px; }
.btn-mst { width: 77px; }
.grid-box { margin-top: 3px; height: 207px; border: 1px solid #b7b7b7; border-radius: 4px; background: linear-gradient(#d8d8d8, #cfcfcf 30px); }
.grid-top { height: 31px; display: flex; align-items: center; padding-left: 5px; }
.sel-all { width: 44px; height: 20px; margin: 0 4px 0 3px; padding: 0 5px 0 4px; }
.search { margin-left: auto; display: flex; align-items: center; margin-right: 10px; }
.search-in { width: 133px; height: 20px; border: solid; border-width: 2px 1px 1px 2px; border-color: #999 #d0d0d0 #d0d0d0 #999; background: #dedede; }
.row { width: 1132px; height: 28px; display: flex; align-items: center; justify-content: space-between; background: #ddd; border-bottom: 1px solid #c2c2c2; }
.row:nth-child(6) { border-bottom: 0; }
.row-head { height: 27px; border: 0; display: grid; grid-template-columns: 447px 105px 105px 104px 297px 74px; align-items: stretch; line-height: 27px; background: #777; color: #dfdfdf; }
.row-head span { padding-left: 10px; }
.row-head span:nth-child(1), .row-head span:nth-child(3), .row-head span:nth-child(6) { background: #828282; }
.link { padding-left: 10px; color: #367da3; letter-spacing: 0; }
.acts { width: 64px; display: flex; align-items: center; color: #555; }
.acts svg { width: 13px; height: 12px; }
.acts .a-trash { width: 10px; margin-left: 4px; }
.acts .a-child { width: 9px; margin-left: 5px; }
.grid-foot { height: 38px; display: flex; align-items: center; justify-content: space-between; padding: 0 8px 0 5px; }
.pager { display: flex; gap: 5px; }
.pg { width: 49px; height: 27px; border: 1px solid #b7b7b7; border-radius: 4px; line-height: 25px; text-align: right; padding-right: 7px; color: #367da3; font-style: normal; }
.pg-last { width: 40px; padding-right: 8px; }
.foot { height: 35px; flex: none; position: relative; display: flex; align-items: center; justify-content: space-between; padding: 0 18px 5px 480px; color: #c8c8c8; font-size: 10px; }
.copy { letter-spacing: .24px; }
.kart { display: flex; flex-direction: column; width: 72px; }
.kart-name { font-family: Lato, sans-serif; font-size: 15px; line-height: 20px; letter-spacing: .2px; color: #dadada; }
.kart-name b { color: #c9743a; font-size: 20px; font-weight: normal; margin-right: -1px; }
.kart-sub { font-size: 4.2px; line-height: 5px; color: #b9673a; padding-left: 11px; }

/* dialog */
.dialog { position: absolute; left: 273px; top: 228px; width: 1000px; height: 397px; padding: 3px; border: 1px solid #9cc0dc; border-radius: 6px; background: linear-gradient(#eff1f2, #f3f5f5); font-family: "Liberation Sans", Arial, sans-serif; font-size: 13px; color: #222; }
.dlg-head { height: 37px; position: relative; border: 1px solid #4291cb; border-radius: 5px; background: linear-gradient(#85b2d4, #76a9d0); display: flex; align-items: center; justify-content: space-between; padding: 0 4px 0 13px; }
.dlg-wave { position: absolute; left: 0; top: 0; width: 990px; height: 35px; }
.dlg-title { position: relative; font-size: 16px; font-weight: bold; color: #f4f4f4; padding-bottom: 2px; }
.dlg-close { position: relative; width: 20px; height: 20px; border: 1px solid #c8dcec; border-radius: 4px; background: #e0eaf2; display: flex; align-items: center; justify-content: center; color: #6299c4; }
.dlg-close svg { width: 10px; height: 10px; }
.dlg-body { display: flex; align-items: flex-start; justify-content: space-between; padding: 6px 13px 0; }
.plan { width: 483px; height: 340px; border: 1px solid #a8a8a8; }
.plan-top { height: 31px; display: flex; align-items: center; border-bottom: 2px solid #d3d3d3; background: #ebebeb; padding-left: 5px; font-size: 12px; color: #222; }
.sel-prog { width: 147px; height: 19px; margin-left: 3px; padding: 0 5px 0 4px; background: #dbe5ef; font-size: 13px; color: #111; }
.sel-prog .caret { font-size: 9px; }
.day { align-self: flex-start; width: 83px; height: 25px; margin: 1px 0 0 51px; border: 2px solid #b7b7b7; border-top: 0; background: #dfeaf4; font: 16px/25px "Liberation Serif", serif; text-align: center; }
.blue { width: 20px; height: 21px; border-radius: 3px; background: #428bca; display: flex; align-items: center; justify-content: center; }
.blue svg { width: 13px; height: 13px; }
.refresh { width: 19px; margin-left: 82px; }
.plan-list { padding: 8px 7px 0 13px; }
.seg { height: 25px; border: 2px solid #6ca2cd; background: linear-gradient(#75a8d2, #255a87); color: #e6e9ec; line-height: 21px; padding-left: 4px; }
.brk { margin: 3px 0 8px; border: 1px solid #adadad; background: #ebebeb; padding-bottom: 2px; }
.brk-head { height: 22px; display: flex; align-items: center; border-bottom: 1px solid #71a5cf; background: #cbdded; padding-left: 5px; }
.rem, .alloc { height: 17px; border: 1px solid #adadad; line-height: 15px; padding: 0 2px; }
.rem { padding-right: 5px; margin-left: auto; background: #ccf3d2; color: #217a2e; }
.alloc { background: #f6e5e7; color: #7d204f; margin-left: -1px; }
.minus { width: 10px; height: 3px; background: #777; margin: 0 5px; }
.spot { height: 24px; margin: 2px 3px 0 2px; display: flex; align-items: center; border: 1px solid #c0bdc9; background: #f5f394; padding: 0 4px 2px 3px; }
.spot + .spot { margin-top: 4px; }
.at { width: 51px; font-size: 11px; color: #b21a10; padding-top: 1px; }
.spot .dur { margin-left: auto; margin-right: 13px; }
.dur { font-size: 11px; color: #1f861f; }
.spot svg { width: 10px; height: 10px; color: #999; margin-top: 1px; }
.caps { letter-spacing: .06px; }
.slot { height: 25px; margin: 4px 3px 4px 2px; border: 2px solid #bd7d0c; background: #e4e4e4; font: 16px/21px "Noto Sans", sans-serif; color: #444; padding-left: 5px; }
.slot + .spot { margin-top: 4px; }
.dragged { position: absolute; left: 25px; top: 158px; width: 455px; height: 25px; margin: 0; padding-left: 2px; opacity: .74; background: #faf8a5; border: 1px solid #fff; box-shadow: 0 4px 18px #0008; color: #333; }

.media { width: 464px; height: 176px; border: 1px solid #b5b5b5; }
.media-top { height: 32px; display: flex; align-items: center; border-bottom: 1px solid #a9a9a9; background: #ebebeb; padding-right: 10px; }
.mtab { align-self: flex-start; width: 58px; height: 31px; border: 1px solid #d2d2d2; line-height: 28px; text-align: center; background: #ebebed; }
.mtab-on { width: 94px; margin: 1px 1px 0 0; height: 31px; border: 0; background: #f5f4d5; font-weight: bold; line-height: 29px; padding-left: 1px; }
.filter { width: 151px; height: 21px; margin: -2px 4px 0 auto; border: 2px solid #d0d0d0; background: #f6f6f6; color: #aaa; line-height: 17px; padding-left: 3px; }
.media-top .blue { margin-top: -2px; }
.media-list { padding: 8px 7px 0 13px; display: flex; flex-direction: column; gap: 6px; }
.clip { height: 23px; display: flex; align-items: center; border: 1px solid #c7c46f; background: #f5f394; padding: 0 1px 0 3px; }
.clip .dur { margin-left: auto; padding-bottom: 1px; }
.count { width: 25px; height: 22px; margin-left: 14px; background: #918f4c; border-left: 1px solid #7c7a3a; color: #f1f1df; line-height: 22px; text-align: center; }
.clip-tall { height: 44px; flex-wrap: wrap; align-content: space-between; }
.clip-name { width: 100%; line-height: 22px; height: 20px; }
```
